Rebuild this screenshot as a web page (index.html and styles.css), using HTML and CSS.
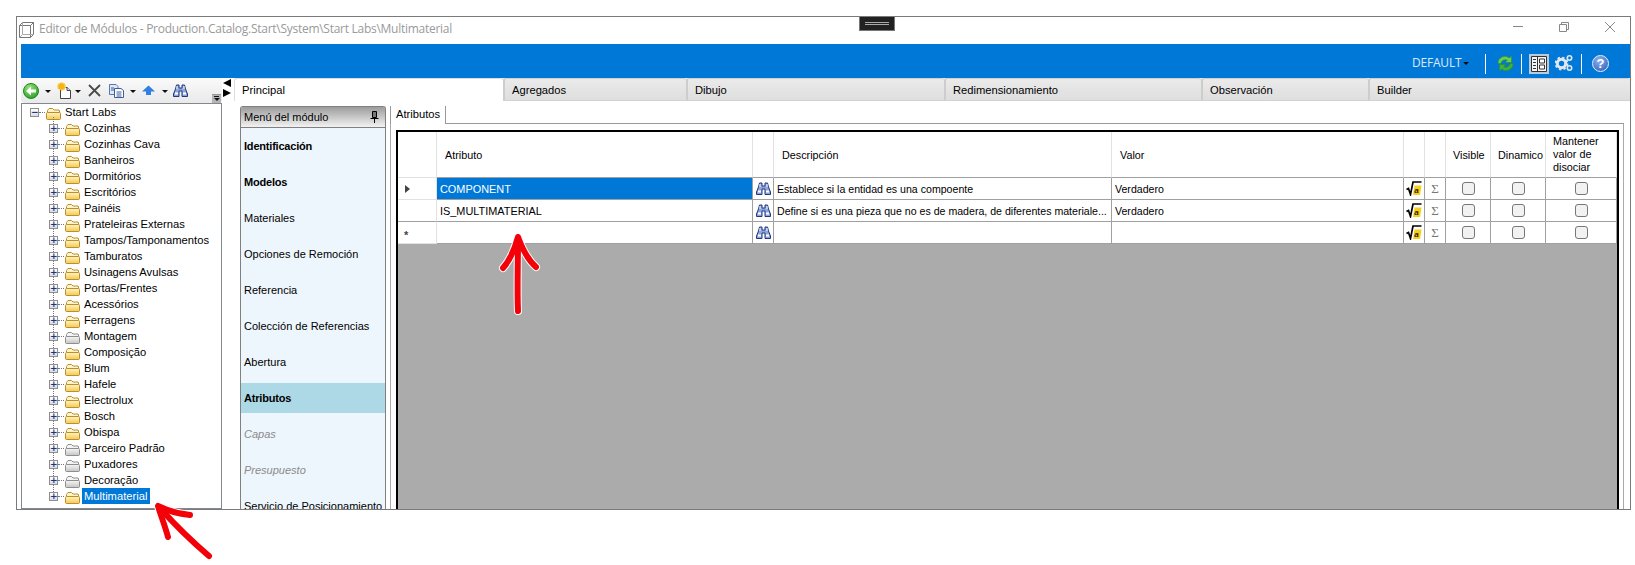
FILE: index.html
```html
<!DOCTYPE html>
<html lang="pt">
<head>
<meta charset="utf-8">
<title>Editor de Módulos</title>
<link rel="stylesheet" href="styles.css">
</head>
<body>
<svg class="defs" aria-hidden="true">
  <defs>
    <linearGradient id="gy" x1="0" y1="0" x2="0" y2="1"><stop offset="0" stop-color="#fff4c4"/><stop offset="1" stop-color="#f5c84e"/></linearGradient>
    <linearGradient id="gg" x1="0" y1="0" x2="0" y2="1"><stop offset="0" stop-color="#f6f6f6"/><stop offset="1" stop-color="#c4c4c4"/></linearGradient>
    <radialGradient id="gr" cx=".4" cy=".3" r=".8"><stop offset="0" stop-color="#9ce67a"/><stop offset="1" stop-color="#1f9a22"/></radialGradient>
  </defs>
  <symbol id="folder" viewBox="0 0 15 13">
    <path d="M1.500 11.500V3.500L3 1.500H6.500L8 3H13L13.500 4V11.500Z" fill="#fff3c8" stroke="#b8912e"/>
    <path d="M.5 6.500Q.5 5.500 1.500 5.500H13.500Q14.500 5.500 14.500 6.500V11.500Q14.500 12.500 13.500 12.500H1.500Q.5 12.500 .5 11.500Z" fill="url(#gy)" stroke="#b8912e"/>
  </symbol>
  <symbol id="folder-grey" viewBox="0 0 15 13">
    <path d="M1.500 11.500V3.500L3 1.500H6.500L8 3H13L13.500 4V11.500Z" fill="#f4f4f4" stroke="#8e8e8e"/>
    <path d="M.5 6.500Q.5 5.500 1.500 5.500H13.500Q14.500 5.500 14.500 6.500V11.500Q14.500 12.500 13.500 12.500H1.500Q.5 12.500 .5 11.500Z" fill="url(#gg)" stroke="#8e8e8e"/>
  </symbol>
  <symbol id="binoc" viewBox="0 0 15 13">
    <path d="M3.500 1H6V4H9V1H11.500L12.500 5L14.500 10V12.500H9V7H6V12.500H.5V10L2.500 5Z" fill="#8aa5dc" stroke="#24377c"/>
    <path d="M2 9.500H5M10 9.500H13" stroke="#fff" stroke-width="2"/>
    <path d="M4 2V5M11 2V5" stroke="#fff"/>
  </symbol>
  <symbol id="formula" viewBox="0 0 16 15">
    <path d="M8.500 4.500H15.500L14 14H7Z" fill="#f8cf12"/>
    <path d="M.5 8.500L2.500 7.500L4.500 13.500L7 1H15.500" fill="none" stroke="#000" stroke-width="1.700"/>
    <text x="8.200" y="12.300" class="formula-a">a</text>
  </symbol>
</svg>

<div class="window">
  <header class="titlebar">
    <svg class="app-icon" width="16" height="16" viewBox="0 0 16 16"><path d="M.5 3.500L3.500 .5H14.500V12.500L11.500 15.500H.5ZM.5 3.500H11.500V15.500M11.500 3.500L14.500 .5" fill="#fff" stroke="#777"/><path d="M3.500 .5V12.500H14.500M3.500 12.500L.5 15.500" fill="none" stroke="#aaa"/></svg>
    <span class="title-text">Editor de Módulos - Production.Catalog.Start\System\Start Labs\Multimaterial</span>
    <div class="win-controls">
      <svg width="10" height="10" viewBox="0 0 10 10"><path d="M0 4.500H10" stroke="#888"/></svg>
      <svg width="10" height="10" viewBox="0 0 10 10"><path d="M.5 2.500H7.500V9.500H.5ZM2.500 2.500V.5H9.500V7.500H7.500" fill="none" stroke="#888"/></svg>
      <svg width="10" height="10" viewBox="0 0 10 10"><path d="M0 0L10 10M10 0L0 10" stroke="#888"/></svg>
    </div>
    <div class="notch"><span></span></div>
  </header>

  <div class="bluebar">
    <span class="bb-default">DEFAULT</span>
    <span class="bb-caret"></span>
    <span class="bb-sep"></span>
    <svg class="bb-sync" width="17" height="17" viewBox="0 0 17 17"><path d="M1 8.500A7 7 0 0 1 12.500 3L14.500 1V7.500H8L10.300 5.200A4.300 4.300 0 0 0 4 8.500Z" fill="#69d048" stroke="#2a8f2a" stroke-width=".6"/><path d="M16 8.500A7 7 0 0 1 4.500 14L2.500 16V9.500H9L6.700 11.800A4.300 4.300 0 0 0 13 8.500Z" fill="#45b232" stroke="#2a8f2a" stroke-width=".6"/></svg>
    <span class="bb-sep bb-sep-b"></span>
    <span class="bb-active"><svg width="16" height="16" viewBox="0 0 16 16"><path d="M.5 .5H15.500V15.500H.5ZM6.500 .5V15.500" fill="#f4f4f4" stroke="#333"/><path d="M2 3.500H5M2 6.500H5M2 9.500H5M2 12.500H5" stroke="#333"/><path d="M8.500 3H13.500V7H8.500ZM8.500 9H13.500V13H8.500Z" fill="#fff" stroke="#333"/></svg></span>
    <svg class="bb-gears" width="18" height="18" viewBox="0 0 18 18"><circle cx="6.500" cy="9.500" r="4.200" fill="none" stroke="#dfe7f0" stroke-width="3"/><circle cx="6.500" cy="9.500" r="6" fill="none" stroke="#dfe7f0" stroke-width="1.800" stroke-dasharray="2.400 2.300"/><circle cx="14.500" cy="4" r="2.200" fill="none" stroke="#dfe7f0" stroke-width="1.600"/><circle cx="14.500" cy="14" r="2.200" fill="none" stroke="#dfe7f0" stroke-width="1.600"/></svg>
    <span class="bb-sep bb-sep-c"></span>
    <span class="bb-help">?</span>
  </div>

  <div class="workspace">
    <aside class="left">
      <div class="toolbar">
        <svg class="t-back" width="16" height="16" viewBox="0 0 16 16"><circle cx="8" cy="8" r="7.500" fill="url(#gr)" stroke="#1d8a20"/><path d="M3 8L8 3.500V6.500H13V9.500H8V12.500Z" fill="#fff"/></svg>
        <span class="t-caret t-c1"></span>
        <svg class="t-new" width="15" height="17" viewBox="0 0 15 17"><path d="M3.500 5.500H10L13.500 8.500V16.500H3.500Z" fill="#fff" stroke="#444"/><path d="M10 5.500V8.500H13.500" fill="#dfe7f5" stroke="#444"/><circle cx="4.500" cy="4.500" r="3.800" fill="#f6b21b" stroke="#f7dc6c" stroke-width="1.400" stroke-dasharray="1.400 1"/></svg>
        <span class="t-caret t-c2"></span>
        <svg class="t-del" width="13" height="13" viewBox="0 0 13 13"><path d="M1 1L12 12M12 1L1 12" stroke="#4a4a4a" stroke-width="1.800"/></svg>
        <svg class="t-copy" width="15" height="14" viewBox="0 0 15 14"><path d="M.5 .5H7L9 2.500V10.500H.5Z" fill="#dfe8f6" stroke="#5a78b0"/><path d="M5.500 4.500H12L14.500 6.500V13.500H5.500Z" fill="#fff" stroke="#3e5c9c"/><path d="M7.500 8H12.500M7.500 10H12.500M7.500 12H12.500M2 4H5M2 6H5" stroke="#3e5c9c"/></svg>
        <span class="t-caret t-c3"></span>
        <svg class="t-up" width="13" height="11" viewBox="0 0 13 11"><path d="M6.500 .5L13 6.500H9V10H4V6.500H0Z" fill="#2f80e0"/></svg>
        <span class="t-caret t-c4"></span>
        <svg class="t-find" width="15" height="13"><use href="#binoc"/></svg>
        <span class="grip"></span>
      </div>
      <div class="tree">
        <div class="node root"><span class="exp">−</span><span class="dots"></span><svg class="fld" width="15" height="13"><use href="#folder"/></svg><span class="lbl">Start Labs</span></div>
        <div class="children">
          <div class="node"><span class="exp">+</span><span class="dots"></span><svg class="fld" width="15" height="13"><use href="#folder"/></svg><span class="lbl">Cozinhas</span></div>
          <div class="node"><span class="exp">+</span><span class="dots"></span><svg class="fld" width="15" height="13"><use href="#folder"/></svg><span class="lbl">Cozinhas Cava</span></div>
          <div class="node"><span class="exp">+</span><span class="dots"></span><svg class="fld" width="15" height="13"><use href="#folder"/></svg><span class="lbl">Banheiros</span></div>
          <div class="node"><span class="exp">+</span><span class="dots"></span><svg class="fld" width="15" height="13"><use href="#folder"/></svg><span class="lbl">Dormitórios</span></div>
          <div class="node"><span class="exp">+</span><span class="dots"></span><svg class="fld" width="15" height="13"><use href="#folder"/></svg><span class="lbl">Escritórios</span></div>
          <div class="node"><span class="exp">+</span><span class="dots"></span><svg class="fld" width="15" height="13"><use href="#folder"/></svg><span class="lbl">Painéis</span></div>
          <div class="node"><span class="exp">+</span><span class="dots"></span><svg class="fld" width="15" height="13"><use href="#folder"/></svg><span class="lbl">Prateleiras Externas</span></div>
          <div class="node"><span class="exp">+</span><span class="dots"></span><svg class="fld" width="15" height="13"><use href="#folder"/></svg><span class="lbl">Tampos/Tamponamentos</span></div>
          <div class="node"><span class="exp">+</span><span class="dots"></span><svg class="fld" width="15" height="13"><use href="#folder"/></svg><span class="lbl">Tamburatos</span></div>
          <div class="node"><span class="exp">+</span><span class="dots"></span><svg class="fld" width="15" height="13"><use href="#folder"/></svg><span class="lbl">Usinagens Avulsas</span></div>
          <div class="node"><span class="exp">+</span><span class="dots"></span><svg class="fld" width="15" height="13"><use href="#folder"/></svg><span class="lbl">Portas/Frentes</span></div>
          <div class="node"><span class="exp">+</span><span class="dots"></span><svg class="fld" width="15" height="13"><use href="#folder"/></svg><span class="lbl">Acessórios</span></div>
          <div class="node"><span class="exp">+</span><span class="dots"></span><svg class="fld" width="15" height="13"><use href="#folder"/></svg><span class="lbl">Ferragens</span></div>
          <div class="node"><span class="exp">+</span><span class="dots"></span><svg class="fld" width="15" height="13"><use href="#folder-grey"/></svg><span class="lbl">Montagem</span></div>
          <div class="node"><span class="exp">+</span><span class="dots"></span><svg class="fld" width="15" height="13"><use href="#folder"/></svg><span class="lbl">Composição</span></div>
          <div class="node"><span class="exp">+</span><span class="dots"></span><svg class="fld" width="15" height="13"><use href="#folder"/></svg><span class="lbl">Blum</span></div>
          <div class="node"><span class="exp">+</span><span class="dots"></span><svg class="fld" width="15" height="13"><use href="#folder"/></svg><span class="lbl">Hafele</span></div>
          <div class="node"><span class="exp">+</span><span class="dots"></span><svg class="fld" width="15" height="13"><use href="#folder"/></svg><span class="lbl">Electrolux</span></div>
          <div class="node"><span class="exp">+</span><span class="dots"></span><svg class="fld" width="15" height="13"><use href="#folder"/></svg><span class="lbl">Bosch</span></div>
          <div class="node"><span class="exp">+</span><span class="dots"></span><svg class="fld" width="15" height="13"><use href="#folder"/></svg><span class="lbl">Obispa</span></div>
          <div class="node"><span class="exp">+</span><span class="dots"></span><svg class="fld" width="15" height="13"><use href="#folder-grey"/></svg><span class="lbl">Parceiro Padrão</span></div>
          <div class="node"><span class="exp">+</span><span class="dots"></span><svg class="fld" width="15" height="13"><use href="#folder-grey"/></svg><span class="lbl">Puxadores</span></div>
          <div class="node"><span class="exp">+</span><span class="dots"></span><svg class="fld" width="15" height="13"><use href="#folder-grey"/></svg><span class="lbl">Decoração</span></div>
          <div class="node"><span class="exp">+</span><span class="dots"></span><svg class="fld" width="15" height="13"><use href="#folder"/></svg><span class="lbl selected">Multimaterial</span></div>
        </div>
      </div>
    </aside>

    <div class="splitter"><span class="arr-l"></span><span class="arr-r"></span></div>

    <main class="main">
      <nav class="tabs">
        <span class="tab active t1">Principal</span>
        <span class="tab t2">Agregados</span>
        <span class="tab t3">Dibujo</span>
        <span class="tab t4">Redimensionamiento</span>
        <span class="tab t5">Observación</span>
        <span class="tab t6">Builder</span>
      </nav>
      <div class="content">
        <section class="menu">
          <div class="menu-head"><span>Menú del módulo</span>
            <svg width="9" height="12" viewBox="0 0 9 12"><path d="M2.500 .5H6.500V6.500H2.500ZM.5 7.500H8.500M4.500 8V12" fill="#777" stroke="#000"/></svg>
          </div>
          <div class="menu-list">
            <div class="m-item strong">Identificación</div>
            <div class="m-item strong">Modelos</div>
            <div class="m-item">Materiales</div>
            <div class="m-item">Opciones de Remoción</div>
            <div class="m-item">Referencia</div>
            <div class="m-item">Colección de Referencias</div>
            <div class="m-item">Abertura</div>
            <div class="m-item strong current">Atributos</div>
            <div class="m-item off">Capas</div>
            <div class="m-item off">Presupuesto</div>
            <div class="m-item">Servicio de Posicionamiento</div>
          </div>
        </section>

        <section class="attrs">
          <div class="attr-tabs"><span class="attr-tab">Atributos</span></div>
          <div class="attr-page">
            <div class="grid">
              <div class="row head">
                <div class="c rh"></div>
                <div class="c hl">Atributo</div>
                <div class="c"></div>
                <div class="c hl">Descripción</div>
                <div class="c hl">Valor</div>
                <div class="c"></div>
                <div class="c"></div>
                <div class="c hc">Visible</div>
                <div class="c hc">Dinamico</div>
                <div class="c hc multi">Mantener valor de disociar</div>
              </div>
              <div class="row">
                <div class="c rh"><span class="cur"></span></div>
                <div class="c txt name sel">COMPONENT</div>
                <div class="c ico"><svg width="15" height="13"><use href="#binoc"/></svg></div>
                <div class="c txt">Establece si la entidad es una compoente</div>
                <div class="c txt">Verdadero</div>
                <div class="c ico"><svg width="16" height="15"><use href="#formula"/></svg></div>
                <div class="c ico sig">Σ</div>
                <div class="c ico"><span class="chk"></span></div>
                <div class="c ico"><span class="chk"></span></div>
                <div class="c ico"><span class="chk"></span></div>
              </div>
              <div class="row">
                <div class="c rh"></div>
                <div class="c txt name">IS_MULTIMATERIAL</div>
                <div class="c ico"><svg width="15" height="13"><use href="#binoc"/></svg></div>
                <div class="c txt">Define si es una pieza que no es de madera, de diferentes materiale...</div>
                <div class="c txt">Verdadero</div>
                <div class="c ico"><svg width="16" height="15"><use href="#formula"/></svg></div>
                <div class="c ico sig">Σ</div>
                <div class="c ico"><span class="chk"></span></div>
                <div class="c ico"><span class="chk"></span></div>
                <div class="c ico"><span class="chk"></span></div>
              </div>
              <div class="row">
                <div class="c rh star">*</div>
                <div class="c txt"></div>
                <div class="c ico"><svg width="15" height="13"><use href="#binoc"/></svg></div>
                <div class="c txt"></div>
                <div class="c txt"></div>
                <div class="c ico"><svg width="16" height="15"><use href="#formula"/></svg></div>
                <div class="c ico sig">Σ</div>
                <div class="c ico"><span class="chk"></span></div>
                <div class="c ico"><span class="chk"></span></div>
                <div class="c ico"><span class="chk"></span></div>
              </div>
            </div>
          </div>
        </section>
      </div>
    </main>
  </div>
</div>

<svg class="annot" width="1635" height="565" viewBox="0 0 1635 565" aria-hidden="true">
  <g fill="none" stroke-linecap="round" stroke-linejoin="round">
    <g stroke="#fff" stroke-width="8">
      <path d="M518 311C517 290 518 262 518 238"/>
      <path d="M503 268C510 260 515 248 518 237C522 248 528 260 536 267"/>
      <path d="M209 556C195 544 175 525 160 508"/>
      <path d="M190 515C180 514 168 511 158 506C161 516 165 526 168 537"/>
    </g>
    <g stroke="#f40009" stroke-width="6">
      <path d="M518 311C517 290 518 262 518 238"/>
      <path d="M503 268C510 260 515 248 518 237C522 248 528 260 536 267"/>
      <path d="M209 556C195 544 175 525 160 508"/>
      <path d="M190 515C180 514 168 511 158 506C161 516 165 526 168 537"/>
    </g>
  </g>
</svg>
</body>
</html>
```
FILE: styles.css
```css
* { box-sizing: border-box; }
html, body { margin: 0; height: 565px; overflow: hidden; background: #fff; }
body {
  position: relative;
  padding: 16px 4px 0 16px;
  font: 11.2px/14px "Liberation Sans", Arial, sans-serif;
  color: #000;
}
.defs { position: absolute; width: 0; height: 0; }
.annot { position: absolute; left: 0; top: 0; pointer-events: none; }

.window {
  width: 1615px;
  height: 494px;
  border: 1px solid #7a7a7a;
  display: flex;
  flex-direction: column;
  overflow: hidden;
  background: #fff;
  padding-left: 4px;
}

/* title bar */
.titlebar { position: relative; height: 27px; flex: none; display: flex; align-items: center; margin-left: -3px; }
.app-icon { flex: none; margin: -2px 4px 0 1px; }
.title-text { font: 12px/16px "Open Sans", sans-serif; letter-spacing: -.27px; color: #9a9a9a; white-space: nowrap; margin-top: -3px; }
.win-controls { margin-left: auto; display: flex; gap: 36px; padding-right: 15px; margin-top: -7px; }
.notch {
  position: absolute; left: 841px; top: 0; width: 36px; height: 14px;
  background: #222; border: 1px solid #777; border-top: 0;
  display: flex; align-items: center; justify-content: center;
}
.notch span { width: 24px; height: 3px; border-top: 1px solid #aaa; border-bottom: 1px solid #aaa; }

/* blue bar */
.bluebar { height: 34px; flex: none; background: #0078d7; display: flex; align-items: center; color: #fff; padding: 5px 0 0 1391px; }
.bb-default { font: 12px/14px "Open Sans", sans-serif; letter-spacing: -.2px; opacity: .85; width: 48px; margin-top: -2px; }
.bb-caret { width: 0; height: 0; border: 3px solid transparent; border-top: 3px solid #111; border-bottom: 0; margin: 0 0 0 3px; }
.bb-sep { width: 1px; height: 20px; background: #fff; margin-left: 16px; flex: none; }
.bb-sync { margin-left: 11px; flex: none; }
.bb-sep-b { margin-left: 7px; }
.bb-active { width: 20px; height: 20px; background: #bccbd9; margin-left: 7px; display: flex; align-items: center; justify-content: center; flex: none; }
.bb-gears { margin-left: 6px; margin-top: -1px; flex: none; }
.bb-sep-c { margin-left: 8px; }
.bb-help {
  width: 17px; height: 17px; border-radius: 50%; margin-left: 10px; flex: none;
  background: radial-gradient(circle at 40% 30%, #8fb4ee, #2756b8);
  border: 1px solid #e8f0fb; color: #fff; font: 700 13px/15px "Liberation Sans", sans-serif; text-align: center;
}

/* workspace */
.workspace { flex: 1; min-height: 0; display: flex; }
.left { width: 201px; flex: none; display: flex; flex-direction: column; }
.toolbar { height: 25px; flex: none; position: relative; display: flex; align-items: center; background: linear-gradient(#fafafa, #e9e9e9); border-radius: 0 0 4px 4px; padding-left: 2px; }
.toolbar svg, .t-caret { flex: none; }
.t-caret { width: 0; height: 0; border: 3px solid transparent; border-top: 3px solid #111; border-bottom: 0; margin-top: 2px; }
.t-c1 { margin-left: 6px; }
.t-new { margin-left: 6px; }
.t-c2 { margin-left: 3px; }
.t-del { margin-left: 7px; }
.t-copy { margin-left: 8px; }
.t-c3 { margin-left: 6px; }
.t-up { margin-left: 6px; }
.t-c4 { margin-left: 7px; }
.t-find { margin-left: 5px; }
.grip { position: absolute; right: 1px; bottom: 0; width: 9px; height: 9px; background: #b4b4b4; border-top: 1px solid #999; }
.grip::before { content: ""; position: absolute; left: 2px; top: 1px; width: 5px; height: 1px; background: #111; }
.grip::after { content: ""; position: absolute; left: 2px; top: 3px; width: 0; height: 0; border: 3px solid transparent; border-top: 3px solid #111; border-bottom: 0; }

.tree { flex: 1; min-height: 0; border: 1px solid #828790; background: #fff; overflow: hidden; padding: 0 0 0 8px; }
.node { display: flex; align-items: center; height: 16px; white-space: nowrap; }
.children { margin-left: 19px; position: relative; }
.children::before { content: ""; position: absolute; left: 4px; top: -3px; bottom: 6px; border-left: 1px dotted #777; }
.exp {
  width: 9px; height: 9px; flex: none; border: 1px solid #8e8f8f; background: linear-gradient(#fff, #dcdcdc);
  font: 700 9px/7px "DejaVu Sans", sans-serif; color: #26318a; text-align: center; position: relative; margin-top: 1px;
}
.dots { width: 6px; flex: none; border-top: 1px dotted #777; margin-right: 1px; }
.fld { flex: none; margin-top: 2px; }
.lbl { margin-left: 2px; padding: 1px 2px; line-height: 14px; }
.lbl.selected { background: #0078d7; color: #fff; height: 16px; padding: 1px 3px 1px 2px; }

/* splitter */
.splitter { width: 12px; flex: none; display: flex; flex-direction: column; gap: 2px; padding: 1px 0 0 1px; }
.arr-l, .arr-r { width: 0; height: 0; border: 4px solid transparent; border-top-width: 4.500px; border-bottom-width: 4.500px; }
.arr-l { border-right: 8px solid #000; border-left: 0; }
.arr-r { border-left: 8px solid #000; border-right: 0; }

/* main tabs */
.main { flex: 1; min-width: 0; display: flex; flex-direction: column; }
.tabs { height: 23px; flex: none; display: flex; background: linear-gradient(#ebebeb, #dedede); border-bottom: 1px solid #d2d2d2; border-radius: 3px 3px 0 0; }
.tab { display: block; padding: 3px 0 0 7px; line-height: 17px; border-top: 1px solid #cfcfcf; border-left: 2px solid #cdcdcd; border-radius: 3px 3px 0 0; flex: none; }
.tab.active { background: #fff; border-top: 1px solid #ddd; border-left: 1px solid #ddd; margin-bottom: -1px; height: 23px; }
.t1 { width: 269px; }
.t2 { width: 183px; }
.t3 { width: 258px; }
.t4 { width: 257px; }
.t5 { width: 167px; }
.t6 { flex: 1; }

.content { flex: 1; min-height: 0; display: flex; padding: 5px 0 0 6px; background: #fff; }

/* module menu */
.menu { width: 146px; flex: none; border: 1px solid #808080; border-bottom: 0; border-radius: 3px 3px 0 0; background: #eef6fd; overflow: hidden; font-size: 11px; }
.menu-head { height: 21px; display: flex; align-items: center; justify-content: space-between; padding: 0 6px 0 3px; background: linear-gradient(#9c9c9c, #f2f2f2); border-bottom: 1px solid #808080; }
.menu-list { display: flex; flex-direction: column; gap: 6px; padding-top: 3px; }
.m-item { height: 30px; flex: none; display: flex; align-items: center; padding-left: 3px; white-space: nowrap; }
.m-item.strong { font-weight: 700; letter-spacing: -.2px; }
.m-item.current { background: #add8e6; }
.m-item.off { color: #8a8a8a; font-style: italic; }

/* attributes */
.attrs { width: 1234px; margin-left: 4px; flex: none; display: flex; flex-direction: column; }
.attr-tabs { height: 18px; flex: none; display: flex; border-bottom: 1px solid #999; }
.attr-tab { width: 56px; height: 18px; background: #fff; border: 1px solid #999; border-top: 0; border-bottom: 0; padding: 0 0 0 5px; line-height: 17px; }
.attr-page { flex: 1; min-height: 0; border-left: 1px solid #aaa; border-right: 1px solid #aaa; padding: 6px 0 0 5px; }
.grid { width: 1223px; height: 100%; border: 2px solid #000; border-bottom: 0; background: #ababab; font-size: 10.800px; }
.row { display: grid; grid-template-columns: 39px 316px 21px 338px 292px 21px 21px 45px 55px 71px; height: 22px; background: #fff; }
.row.head { height: 46px; }
.c { border-right: 1px solid #a0a0a0; border-bottom: 1px solid #a0a0a0; overflow: hidden; white-space: nowrap; display: flex; align-items: center; min-width: 0; }
.row.head .c { border-right-color: #e2e2e2; }
.row.head .hl { padding-left: 8px; }
.row.head .hc { padding-left: 7px; }
.row.head .multi { white-space: normal; line-height: 13px; }
.rh { border-right-color: #e2e2e2; border-bottom-color: #e2e2e2; }
.row:nth-child(3) .rh { border-bottom-color: #a0a0a0; }
.txt { padding-left: 3px; font-size: 10.600px; }
.name { font-size: 10.900px; }
.sel { background: #0078d7; color: #fff; }
.ico { justify-content: center; }
.sig { font: 13px "Liberation Serif", serif; color: #777; }
.chk { width: 13px; height: 13px; border: 1px solid #777; border-radius: 3px; background: #f2f2f2; }
.cur { width: 0; height: 0; border: 4px solid transparent; border-left: 5px solid #444; border-right: 0; margin-left: 7px; }
.star { padding-left: 6px; padding-top: 5px; font: 700 11px "Liberation Sans", sans-serif; color: #444; }
.formula-a { font: italic 700 8px "Liberation Sans", sans-serif; fill: #222; }
```
